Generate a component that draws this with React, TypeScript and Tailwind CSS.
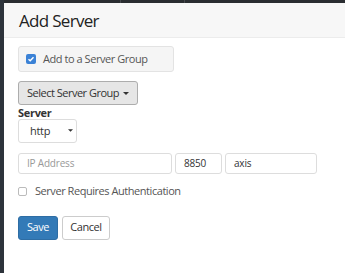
export default function App() {
  return (
    <div className="w-[345px] h-[273px] flex bg-white overflow-hidden text-[#333]" style={{ fontFamily: '"Open Sans", sans-serif' }}>
      <div className="w-[4px] bg-[#2d333b] shrink-0" />
      <div className="flex-1 flex flex-col">
        <div className="h-[3px] bg-[#2a2d31] flex">
          <div className="w-[116px]" />
          <div className="w-[1px] bg-[#45484c]" />
          <div className="w-[63px]" />
          <div className="w-[1px] bg-[#45484c]" />
        </div>
        <div className="h-[35px] bg-[#f7f7f7] border-b border-[#ececec] flex items-center pl-[15px]">
          <span className="text-[17px] tracking-[-0.7px] leading-none text-[#222] mt-[1px]">Add Server</span>
        </div>
        <div className="flex flex-col pl-[14px] pt-[8px]">
          <div className="w-[156px] h-[26px] bg-[#f5f5f5] border border-[#e3e3e3] rounded-[3px] flex items-center pl-[7px] gap-[7px]">
            <div className="w-[10px] h-[10px] rounded-[2px] bg-[#3b82d6] flex items-center justify-center">
              <svg width="8" height="8" viewBox="0 0 8 8"><path d="M1.5 4.2 L3.2 5.8 L6.5 2.2" stroke="white" strokeWidth="1.4" fill="none" /></svg>
            </div>
            <span className="text-[11px] tracking-[-0.45px] text-[#555] whitespace-nowrap">Add to a Server Group</span>
          </div>
          <div className="mt-[9px] w-[120px] h-[24px] bg-[#e6e6e6] border border-[#adadad] rounded-[3px] flex items-center pl-[8px] gap-[4px]">
            <span className="text-[11px] tracking-[-0.5px] text-[#333] whitespace-nowrap">Select Server Group</span>
            <svg width="6" height="4" viewBox="0 0 6 4" className="mt-[1px]"><path d="M0 0 L6 0 L3 3 Z" fill="#333" /></svg>
          </div>
          <div className="text-[11px] tracking-[-0.3px] font-bold text-[#333] leading-none mt-[2px]">Server</div>
          <div className="mt-[1px] w-[59px] h-[24px] border border-[#ddd] rounded-[3px] flex items-center pl-[11px]">
            <span className="text-[11px] tracking-[-0.3px] text-[#333]">http</span>
            <svg width="5" height="4" viewBox="0 0 6 4" className="ml-[18px]"><path d="M0 0 L6 0 L3 3 Z" fill="#333" /></svg>
          </div>
          <div className="mt-[10px] flex gap-[3px]">
            <div className="w-[154px] h-[21px] border border-[#ddd] rounded-[3px] flex items-center pl-[8px]">
              <span className="text-[10px] tracking-[-0.2px] text-[#999]">IP Address</span>
            </div>
            <div className="w-[47px] h-[21px] border border-[#ddd] rounded-[3px] flex items-center pl-[8px]">
              <span className="text-[10px] tracking-[-0.2px] text-[#333]">8850</span>
            </div>
            <div className="w-[92px] h-[21px] border border-[#ddd] rounded-[3px] flex items-center pl-[8px]">
              <span className="text-[10px] tracking-[-0.2px] text-[#333]">axis</span>
            </div>
          </div>
          <div className="mt-[9px] flex items-center gap-[8px]">
            <div className="w-[9px] h-[9px] border border-[#bbb] rounded-[2px] bg-white" />
            <span className="text-[11px] tracking-[-0.45px] text-[#555] whitespace-nowrap">Server Requires Authentication</span>
          </div>
          <div className="mt-[16px] flex gap-[4px]">
            <div className="w-[40px] h-[24px] bg-[#337ab7] border border-[#2e6da4] rounded-[3px] flex items-center justify-center">
              <span className="text-[11px] tracking-[-0.45px] text-white">Save</span>
            </div>
            <div className="w-[48px] h-[24px] bg-white border border-[#ccc] rounded-[3px] flex items-center justify-center">
              <span className="text-[11px] tracking-[-0.45px] text-[#333]">Cancel</span>
            </div>
          </div>
        </div>
      </div>
    </div>
  );
}
